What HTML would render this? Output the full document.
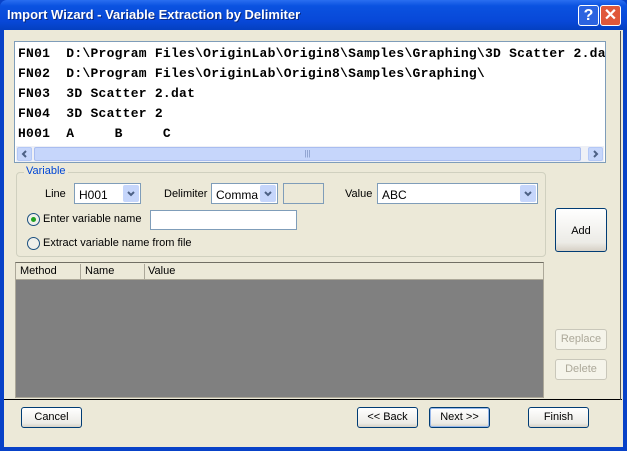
<!DOCTYPE html>
<html><head><meta charset="utf-8"><style>
*{box-sizing:border-box;margin:0;padding:0}
body{width:627px;height:451px;overflow:hidden;background:#0842c8;font-family:Tahoma,"Liberation Sans",sans-serif;font-size:11px;color:#000;position:relative}
.a{position:absolute}
.title{left:0;top:0;width:627px;height:30px;background:linear-gradient(#2a6ef0,#0a52e0 20%,#0848d8 70%,#0440c0);border-radius:7px 7px 0 0}
.tt{left:7px;top:7px;color:#fff;font-weight:bold;font-size:13px;font-family:"Liberation Sans",sans-serif;text-shadow:1px 1px #0a2a80}
.tb{top:5px;width:21px;height:21px;border:1px solid #fff;border-radius:3px;color:#fff;font-weight:bold;font-size:16px;text-align:center;line-height:19px;font-family:"Liberation Sans",sans-serif}
.client{left:4px;top:30px;width:619px;height:417px;background:#ece9d8}
.text{left:14px;top:41px;width:592px;height:122px;background:#fff;border:1px solid #7f9db9;overflow:hidden}
.mono{font-family:"Liberation Mono",monospace;font-weight:bold;font-size:13px;letter-spacing:0.25px;white-space:pre;left:3px}
.sb{left:1px;top:104px;width:588px;height:16px;background:#eef0f6}
.sbb{top:1px;width:15px;height:14px;background:#c6d6fb;border:1px solid #b4c8f6;border-radius:2px}
.grp{left:16px;top:172px;width:530px;height:85px;border:1px solid #d0d0bf;border-radius:4px}
.cb{background:#fff;border:1px solid #7f9db9;height:21px;padding:4px 0 0 4px;font-size:12px}
.arr{position:absolute;right:1px;top:1px;width:16px;height:17px;background:#c6d6fb;border-radius:2px}
.btn{border:1px solid #003c74;border-radius:3px;background:linear-gradient(#fff,#ecebe6 80%,#d6d0c5);text-align:center;font-size:11px}
.dis{border:1px solid #c9c7ba;border-radius:3px;color:#aca899;text-align:center;background:#f5f4ea}
.rad{width:13px;height:13px;border:1px solid #1c5180;border-radius:50%;background:#f0f0ea}
</style></head><body>
<div class="a title"></div>
<div class="a tt">Import Wizard - Variable Extraction by Delimiter</div>
<div class="a tb" style="left:578px;background:#2b63e0">?</div>
<div class="a tb" style="left:600px;background:#e0583a">✕</div>
<div class="a client"></div>
<div class="a" style="left:4px;top:399px;width:618px;height:1px;background:#000"></div>
<div class="a" style="left:620px;top:31px;width:1px;height:369px;background:#555"></div>
<div class="a text">
 <div class="a mono" style="top:4px">FN01  D:\Program Files\OriginLab\Origin8\Samples\Graphing\3D Scatter 2.dat</div>
 <div class="a mono" style="top:24px">FN02  D:\Program Files\OriginLab\Origin8\Samples\Graphing\</div>
 <div class="a mono" style="top:44px">FN03  3D Scatter 2.dat</div>
 <div class="a mono" style="top:64px">FN04  3D Scatter 2</div>
 <div class="a mono" style="top:84px">H001  A     B     C</div>
 <div class="a sb">
  <div class="a sbb" style="left:1px"><svg width="13" height="12" class="a" style="left:0;top:0"><path d="M8 3L5 6L8 9" stroke="#4d6185" stroke-width="2" fill="none"/></svg></div>
  <div class="a" style="left:18px;top:1px;width:547px;height:14px;background:#c6d6fb;border:1px solid #a9bdf0;border-radius:2px;text-align:center;color:#7a8fbf;font-size:8px;line-height:12px">|||</div>
  <div class="a sbb" style="left:572px"><svg width="13" height="12" class="a" style="left:0;top:0"><path d="M5 3L8 6L5 9" stroke="#4d6185" stroke-width="2" fill="none"/></svg></div>
 </div>
</div>
<div class="a grp"></div>
<div class="a" style="left:24px;top:165px;background:#ece9d8;color:#0046d5;padding:0 2px">Variable</div>
<div class="a" style="left:45px;top:188px">Line</div>
<div class="a cb" style="left:74px;top:183px;width:67px">H001<div class="arr"><svg width="16" height="17"><path d="M5 7L8 10L11 7" stroke="#4d6185" stroke-width="2" fill="none"/></svg></div></div>
<div class="a" style="left:164px;top:188px">Delimiter</div>
<div class="a cb" style="left:211px;top:183px;width:67px">Comma<div class="arr"><svg width="16" height="17"><path d="M5 7L8 10L11 7" stroke="#4d6185" stroke-width="2" fill="none"/></svg></div></div>
<div class="a" style="left:283px;top:183px;width:41px;height:21px;border:1px solid #7f9db9;background:#ece9d8"></div>
<div class="a" style="left:345px;top:188px">Value</div>
<div class="a cb" style="left:377px;top:183px;width:161px">ABC<div class="arr"><svg width="16" height="17"><path d="M5 7L8 10L11 7" stroke="#4d6185" stroke-width="2" fill="none"/></svg></div></div>
<div class="a rad" style="left:27px;top:213px"><div class="a" style="left:3px;top:3px;width:5px;height:5px;border-radius:50%;background:#21a121"></div></div>
<div class="a" style="left:43px;top:213px">Enter variable name</div>
<div class="a" style="left:150px;top:210px;width:147px;height:20px;background:#fff;border:1px solid #7f9db9"></div>
<div class="a rad" style="left:27px;top:237px"></div>
<div class="a" style="left:43px;top:237px">Extract variable name from file</div>
<div class="a btn" style="left:555px;top:208px;width:52px;height:44px;line-height:44px">Add</div>
<div class="a" style="left:15px;top:262px;width:529px;height:136px;background:#808080;border:1px solid #aca899;border-top-color:#716f64"></div>
<div class="a" style="left:16px;top:263px;width:527px;height:17px;background:#ece9d8;border-bottom:1px solid #aca899"></div>
<div class="a" style="left:80px;top:264px;width:1px;height:15px;background:#aca899"></div>
<div class="a" style="left:144px;top:264px;width:1px;height:15px;background:#aca899"></div>
<div class="a" style="left:20px;top:265px">Method</div>
<div class="a" style="left:85px;top:265px">Name</div>
<div class="a" style="left:148px;top:265px">Value</div>
<div class="a dis" style="left:555px;top:329px;width:52px;height:21px;line-height:19px">Replace</div>
<div class="a dis" style="left:555px;top:359px;width:52px;height:21px;line-height:19px">Delete</div>
<div class="a btn" style="left:21px;top:407px;width:61px;height:21px;line-height:19px">Cancel</div>
<div class="a btn" style="left:357px;top:407px;width:61px;height:21px;line-height:19px">&lt;&lt; Back</div>
<div class="a btn" style="left:429px;top:407px;width:61px;height:21px;line-height:19px;box-shadow:inset 0 0 0 1px #98b8ea">Next &gt;&gt;</div>
<div class="a btn" style="left:528px;top:407px;width:61px;height:21px;line-height:19px">Finish</div>
</body></html>
